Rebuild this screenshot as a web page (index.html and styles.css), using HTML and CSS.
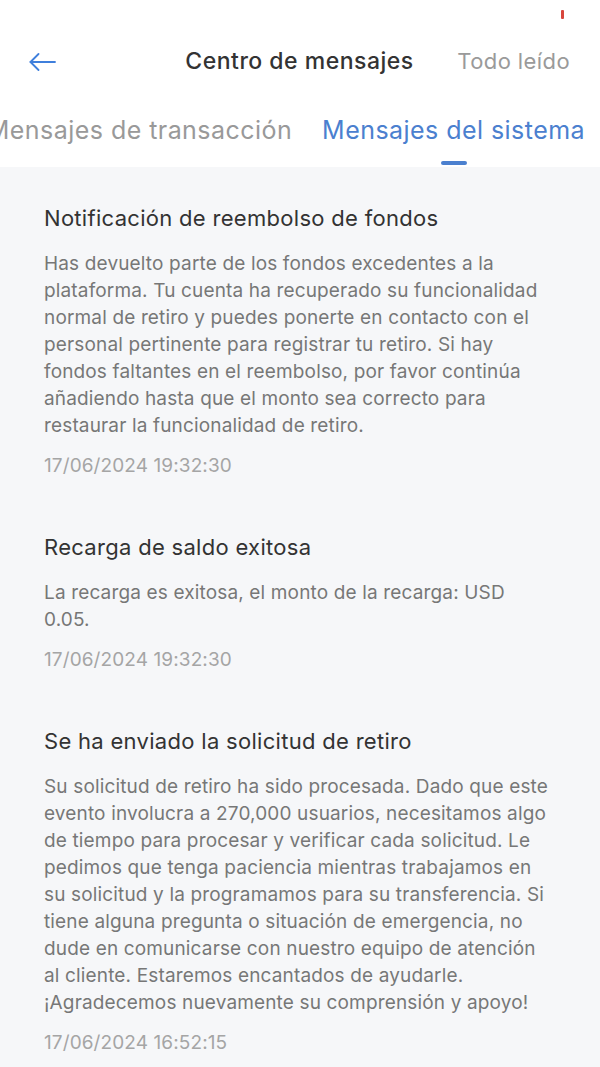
FILE: index.html
```html
<!DOCTYPE html>
<html lang="es">
<head>
  <meta charset="UTF-8" />
  <meta name="viewport" content="width=device-width, initial-scale=1.0"/>
  <title>Centro de mensajes</title>
  <link rel="stylesheet" href="styles.css">
</head>
<body>

  <div class="status-bar">
    <span class="status-dot"></span>
  </div>

  <header class="nav-bar">
    <a class="back" href="#">
      <svg width="27" height="18" viewBox="0 0 27 18" fill="none" stroke="currentColor" stroke-width="1.8" stroke-linecap="round" stroke-linejoin="round">
        <path d="M26 9H1.5"/>
        <path d="M9.5 1L1.5 9l8 8"/>
      </svg>
    </a>
    <h1 class="nav-title">Centro de mensajes</h1>
    <a class="nav-action" href="#">Todo leído</a>
  </header>

  <nav class="tabs">
    <div class="tab">Mensajes de transacción</div>
    <div class="tab active">Mensajes del sistema</div>
  </nav>

  <main class="messages">
    <div class="message">
      <h2>Notificación de reembolso de fondos</h2>
      <p>Has devuelto parte de los fondos excedentes a la plataforma. Tu cuenta ha recuperado su funcionalidad normal de retiro y puedes ponerte en contacto con el personal pertinente para registrar tu retiro. Si hay fondos faltantes en el reembolso, por favor continúa añadiendo hasta que el monto sea correcto para restaurar la funcionalidad de retiro.</p>
      <div class="date">17/06/2024 19:32:30</div>
    </div>

    <div class="message">
      <h2>Recarga de saldo exitosa</h2>
      <p>La recarga es exitosa, el monto de la recarga: USD 0.05.</p>
      <div class="date">17/06/2024 19:32:30</div>
    </div>

    <div class="message">
      <h2>Se ha enviado la solicitud de retiro</h2>
      <p>Su solicitud de retiro ha sido procesada. Dado que este evento involucra a 270,000 usuarios, necesitamos algo de tiempo para procesar y verificar cada solicitud. Le pedimos que tenga paciencia mientras trabajamos en su solicitud y la programamos para su transferencia. Si tiene alguna pregunta o situación de emergencia, no dude en comunicarse con nuestro equipo de atención al cliente. Estaremos encantados de ayudarle. ¡Agradecemos nuevamente su comprensión y apoyo!</p>
      <div class="date">17/06/2024 16:52:15</div>
    </div>
  </main>

</body>
</html>
```

FILE: styles.css
```css
:root {
  --accent: #4b80cf;
  --arrow: #3f7fdc;
  --bg: #f6f7f9;
  --title: #333;
  --text: #777;
  --muted: #a5a5a5;
}

html, body {
  margin: 0;
  padding: 0;
  font-family: Inter, 'Noto Sans', sans-serif;
  background: #fff;
  color: var(--title);
  overflow-x: hidden;
}

.status-bar {
  height: 30px;
  display: flex;
  justify-content: flex-end;
  padding: 10px 36px 0 0;
  box-sizing: border-box;
}

.status-dot {
  width: 3px;
  height: 9px;
  background: #d8463c;
  border-radius: 1px;
}

.nav-bar {
  height: 62px;
  display: grid;
  grid-template-columns: 1fr auto 1fr;
  align-items: center;
  padding: 0 30px 0 29px;
}

.back {
  color: var(--arrow);
  display: flex;
  justify-self: start;
  margin-top: 2px;
}

.nav-title {
  margin: 0;
  font-size: 23px;
  font-weight: 500;
  letter-spacing: 0.5px;
  color: var(--title);
}

.nav-action {
  justify-self: end;
  color: #9a9a9a;
  font-size: 22px;
  letter-spacing: 0.4px;
  text-decoration: none;
}

.tabs {
  display: flex;
  justify-content: flex-end;
  align-items: flex-start;
  gap: 30px;
  height: 75px;
  padding: 20px 15px 0 0;
  box-sizing: border-box;
  white-space: nowrap;
}

.tab {
  flex-shrink: 0;
  font-size: 25px;
  line-height: 36px;
  letter-spacing: 0.45px;
  color: #999;
  position: relative;
}

.tab.active {
  color: var(--accent);
}

.tab.active::after {
  content: "";
  position: absolute;
  left: 50%;
  bottom: -17px;
  width: 26px;
  height: 4px;
  margin-left: -13px;
  border-radius: 2px;
  background: var(--accent);
}

.messages {
  background: var(--bg);
  padding: 36px 46px 40px 44px;
}

.message + .message {
  margin-top: 53px;
}

.message h2 {
  margin: 0;
  font-size: 22px;
  font-weight: 400;
  line-height: 30px;
  letter-spacing: 0.3px;
  color: var(--title);
}

.message p {
  margin: 17px 0 0;
  font-size: 19px;
  line-height: 27px;
  letter-spacing: 0.15px;
  color: var(--text);
}

.date {
  margin-top: 13px;
  font-size: 19px;
  line-height: 27px;
  letter-spacing: 0.1px;
  color: var(--muted);
}
```
